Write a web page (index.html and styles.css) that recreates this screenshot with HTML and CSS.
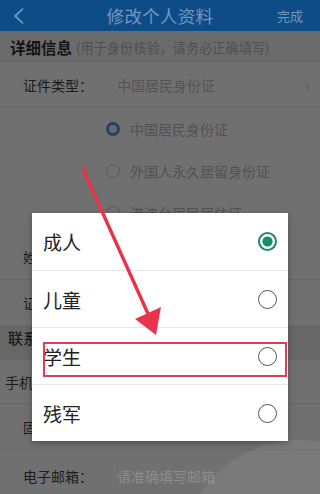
FILE: index.html
```html
<!DOCTYPE html>
<html lang="zh-CN">
<head>
<meta charset="utf-8">
<title>修改个人资料</title>
<link rel="stylesheet" href="styles.css">
</head>
<body>
<div class="app">
  <header class="topbar">
    <div class="back">
      <svg width="11" height="16" viewBox="0 0 11 16"><path d="M9.5 1.2 L2.2 8 L9.5 14.8" fill="none" stroke="#7596bd" stroke-width="1.8" stroke-linecap="round" stroke-linejoin="round"/></svg>
    </div>
    <div class="title">修改个人资料</div>
    <div class="done">完成</div>
  </header>

  <div class="section-title sec1"><strong>详细信息</strong><span class="hint">(用于身份核验，请务必正确填写)</span></div>

  <div class="row type-row">
    <span class="label">证件类型：</span>
    <span class="value">中国居民身份证</span>
    <span class="chev">›</span>
  </div>

  <div class="options">
    <div class="opt"><span class="r r-on"></span>中国居民身份证</div>
    <div class="opt"><span class="r"></span>外国人永久居留身份证</div>
    <div class="opt"><span class="r"></span>港澳台居民居住证</div>
  </div>

  <div class="row"><span class="label">姓名：</span></div>
  <div class="row"><span class="label">证件号码：</span></div>
  <div class="section-title sec2"><strong>联系方式</strong></div>
  <div class="row phone"><span class="label">手机号码：</span></div>
  <div class="row"><span class="label">固定电话：</span></div>
  <div class="row email"><span class="label">电子邮箱：</span><span class="ph">请准确填写邮箱</span></div>

  <div class="blob"></div>

  <div class="overlay">
    <div class="dialog">
      <div class="item"><span class="txt">成人</span><span class="radio on"></span></div>
      <div class="item"><span class="txt">儿童</span><span class="radio"></span></div>
      <div class="item"><span class="txt">学生</span><span class="radio"></span><span class="mark"></span></div>
      <div class="item"><span class="txt">残军</span><span class="radio"></span></div>
    </div>
  </div>

  <svg class="arrow" viewBox="0 0 320 494" width="320" height="494">
    <line x1="83" y1="169" x2="149" y2="316" stroke="#e8344b" stroke-width="3.4" stroke-linecap="round"/>
    <polygon points="156,335 135,319 161,307" fill="#e8344b"/>
  </svg>
</div>
</body>
</html>
```
FILE: styles.css
```css
* { box-sizing: border-box; }
html, body { margin: 0; padding: 0; }
body { width: 320px; height: 494px; overflow: hidden; }

.app {
  position: relative;
  width: 320px;
  height: 494px;
  overflow: hidden;
  background: #707070;
  font-family: "Noto Sans CJK SC", "Noto Sans", sans-serif;
  color: #1c1c1c;
}

.topbar {
  height: 31px;
  background: #0d4c87;
  display: grid;
  grid-template-columns: 70px 1fr 70px;
  align-items: center;
  color: #7596bd;
}
.back { padding-left: 13px; display: flex; align-items: center; }
.title { text-align: center; font-size: 17.5px; line-height: 31px; letter-spacing: 0.3px; }
.done { text-align: right; padding-right: 17px; font-size: 13px; }

.section-title {
  display: flex;
  align-items: center;
  background: #6b6b6b;
}
.sec1 { height: 32px; padding-left: 10px; }
.sec1 strong { font-size: 15.5px; font-weight: 700; color: #141414; }
.hint { font-size: 13.2px; color: #4f4f4f; margin-left: 4px; }
.sec2 { height: 34px; padding-left: 8px; padding-bottom: 12px; background: #676767; }
.sec2 strong { font-size: 15px; font-weight: 500; color: #1a1a1a; }

.row {
  height: 46px;
  display: flex;
  align-items: center;
  padding-left: 23px;
  font-size: 14px;
  border-bottom: 1px solid #686868;
}
.label { width: 94px; color: #1c1c1c; }
.type-row { height: 44px; }
.value { color: #545454; flex: 1; }
.chev { color: #5a5a5a; padding-right: 10px; font-size: 18px; }

.options { padding-top: 1px; }
.opt {
  height: 42px;
  display: flex;
  align-items: center;
  padding-left: 106px;
  font-size: 14px;
  color: #525252;
  gap: 10px;
}
.r {
  width: 14px; height: 14px;
  border-radius: 50%;
  border: 1.5px solid #5a5a5a;
}
.r-on { border: 3px solid #253f6c; background: #6a6a6a; }

.phone { height: 44px; padding-left: 5px; }
.email { height: 52px; }
.ph { color: #8c8c8c; }

.blob {
  position: absolute;
  left: 180px; top: 440px;
  width: 240px; height: 240px;
  border-radius: 50%;
  background: rgba(255,255,255,0.07);
}

.overlay {
  position: absolute;
  inset: 0;
  display: flex;
  justify-content: center;
  align-items: flex-start;
  padding-top: 213px;
}
.dialog {
  width: 256px;
  background: #fff;
  box-shadow: 0 2px 6px rgba(0,0,0,0.3);
}
.item {
  position: relative;
  height: 57px;
  display: flex;
  align-items: center;
  justify-content: space-between;
  padding: 0 11px;
}
.item + .item { border-top: 1px solid #e6e6e6; }
.txt { font-size: 19px; color: #222; }
.radio {
  width: 19px; height: 19px;
  border-radius: 50%;
  border: 1.6px solid #555;
}
.radio.on {
  border: 2px solid #1a8a6c;
  background: radial-gradient(circle, #1a8a6c 0 4.8px, #fff 5.3px);
}
.mark {
  position: absolute;
  left: 11px; right: 1px;
  top: 14px; height: 35px;
  border: 2px solid #da3f59;
}

.arrow { position: absolute; left: 0; top: 0; pointer-events: none; }
```
